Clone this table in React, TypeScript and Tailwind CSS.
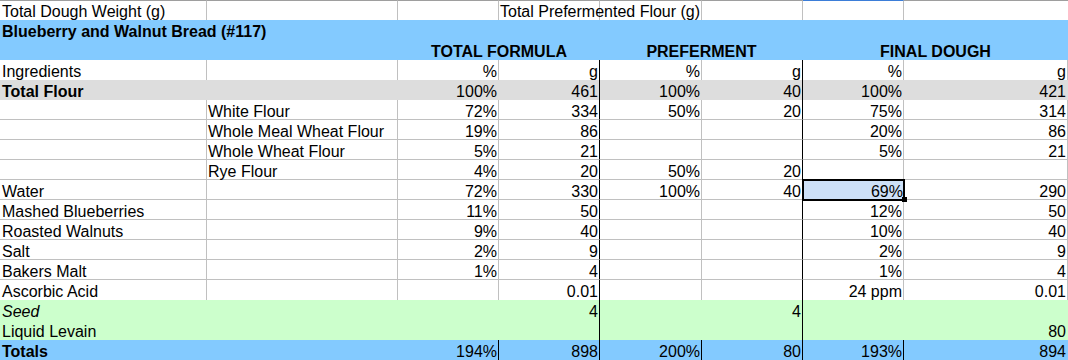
import React from "react";

type Kind = "white" | "grey" | "green" | "total";

type Row = {
  kind: Kind;
  label?: string;
  sub?: string;
  v: string[];
  bold?: boolean;
  italic?: boolean;
  beforeFill?: boolean;
  selected?: number;
};

const rows: Row[] = [
  { kind: "white", label: "Ingredients", v: ["%", "g", "%", "g", "%", "g"], beforeFill: true },
  { kind: "grey", label: "Total Flour", bold: true, v: ["100%", "461", "100%", "40", "100%", "421"] },
  { kind: "white", sub: "White Flour", v: ["72%", "334", "50%", "20", "75%", "314"] },
  { kind: "white", sub: "Whole Meal Wheat Flour", v: ["19%", "86", "", "", "20%", "86"] },
  { kind: "white", sub: "Whole Wheat Flour", v: ["5%", "21", "", "", "5%", "21"] },
  { kind: "white", sub: "Rye Flour", v: ["4%", "20", "50%", "20", "", ""] },
  { kind: "white", label: "Water", v: ["72%", "330", "100%", "40", "69%", "290"], selected: 4 },
  { kind: "white", label: "Mashed Blueberries", v: ["11%", "50", "", "", "12%", "50"] },
  { kind: "white", label: "Roasted Walnuts", v: ["9%", "40", "", "", "10%", "40"] },
  { kind: "white", label: "Salt", v: ["2%", "9", "", "", "2%", "9"] },
  { kind: "white", label: "Bakers Malt", v: ["1%", "4", "", "", "1%", "4"] },
  { kind: "white", label: "Ascorbic Acid", v: ["", "0.01", "", "", "24 ppm", "0.01"], beforeFill: true },
  { kind: "green", label: "Seed", italic: true, v: ["", "4", "", "4", "", ""] },
  { kind: "green", label: "Liquid Levain", v: ["", "", "", "", "", "80"] },
  { kind: "total", label: "Totals", bold: true, v: ["194%", "898", "200%", "80", "193%", "894"] },
];

const bgFor: Record<Kind, string> = {
  white: "bg-white",
  grey: "bg-[#dddddd]",
  green: "bg-[#ccffcc]",
  total: "bg-[#83caff]",
};

// col index 0..7 (A..H)
function rightBorder(kind: Kind, col: number) {
  if (kind === "total") {
    return col >= 2 && col <= 6 ? "border-r-black" : "border-r-transparent";
  }
  if (col === 3 || col === 5) return "border-r-black";
  return kind === "white" ? "border-r-[#c0c0c0]" : "border-r-transparent";
}

function SheetRow({ row }: { row: Row }) {
  const bottom =
    row.kind === "white" && !row.beforeFill ? "border-b border-b-[#c0c0c0]" : "";
  const cells = [row.label ?? "", row.sub ?? "", ...row.v];

  return (
    <>
      {cells.map((text, i) => {
        const isSel = row.selected !== undefined && row.selected + 2 === i;
        return (
          <div
            key={i}
            className={`relative h-[20px] border-r pt-[3px] leading-[18px] whitespace-nowrap ${bgFor[row.kind]} ${rightBorder(
              row.kind,
              i
            )} ${bottom} ${i === 0 ? "pl-[2px] text-left" : i === 1 ? "pl-[1px] text-left" : "pr-[1px] text-right"} ${
              i === 0 && row.bold ? "font-bold" : ""
            } ${i === 0 && row.italic ? "italic" : ""}`}
          >
            {isSel ? (
              <>
                <div className="absolute left-[-1px] top-[-1px] z-10 h-[22px] w-[103px] border-2 border-black bg-[#cde0f7] pt-[2px] text-right leading-[18px]">
                  {text}
                </div>
                <div className="absolute left-[99px] top-[17px] z-20 h-[5px] w-[5px] bg-black" />
              </>
            ) : (
              text
            )}
          </div>
        );
      })}
    </>
  );
}

export default function App() {
  return (
    <div className="h-[360px] w-[1068px] overflow-hidden bg-white font-['Liberation_Sans',Arial,sans-serif] text-[16px] text-black">
      <div className="grid grid-cols-[207px_191px_101px_101px_102px_101px_101px_1fr]">
        {/* Row 1 */}
        <div className="h-[20px] border-t border-r border-t-[#9e9e9e] border-r-[#c0c0c0] pl-[2px] pt-[2px] leading-[18px] whitespace-nowrap">
          Total Dough Weight (g)
        </div>
        <div className="h-[20px] border-t border-r border-t-[#9e9e9e] border-r-[#c0c0c0]" />
        <div className="h-[20px] border-t border-r border-t-[#9e9e9e] border-r-[#c0c0c0]" />
        <div className="h-[20px] border-t border-r border-t-[#9e9e9e] border-r-[#c0c0c0] pl-[1px] pt-[2px] leading-[18px] whitespace-nowrap">
          Total Prefermented Flour (g)
        </div>
        <div className="h-[20px] border-t border-r border-t-[#9e9e9e] border-r-[#c0c0c0]" />
        <div className="h-[20px] border-t border-r border-t-[#9e9e9e] border-r-[#c0c0c0]" />
        <div className="h-[20px] border-t border-r border-t-[#3b7dd8] border-r-[#c0c0c0]" />
        <div className="h-[20px] border-t border-t-[#9e9e9e]" />

        {/* Title */}
        <div className="col-span-8 h-[20px] bg-[#83caff] pl-[2px] pt-[3px] font-bold leading-[18px] whitespace-nowrap">
          Blueberry and Walnut Bread (#117)
        </div>

        {/* Section headers */}
        <div className="col-span-2 h-[20px] bg-[#83caff]" />
        <div className="col-span-2 h-[20px] bg-[#83caff] pt-[3px] text-center font-bold leading-[18px]">
          TOTAL FORMULA
        </div>
        <div className="col-span-2 h-[20px] bg-[#83caff] pt-[3px] text-center font-bold leading-[18px]">
          PREFERMENT
        </div>
        <div className="col-span-2 h-[20px] bg-[#83caff] pt-[3px] text-center font-bold leading-[18px]">
          FINAL DOUGH
        </div>

        {rows.map((r, i) => (
          <SheetRow key={i} row={r} />
        ))}
      </div>
    </div>
  );
}
